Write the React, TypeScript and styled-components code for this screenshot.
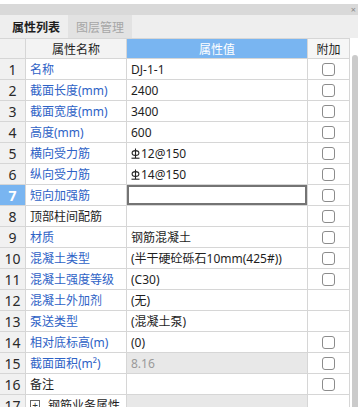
import React from "react"
import styled, { createGlobalStyle } from "styled-components"

const Global = createGlobalStyle`
  html, body { margin: 0; padding: 0; overflow: hidden; background: #fff; }
  body { font-family: "Noto Sans", "Noto Sans CJK SC", sans-serif; font-size: 12px; color: #222; }
`

const Panel = styled.div`width:358px;height:407px;padding-top:4px;box-sizing:border-box;display:flex;flex-direction:column;overflow:hidden;`
const TitleBar = styled.div`height:11px;background:#d9d9d9;display:flex;justify-content:flex-end;align-items:center;padding-right:2px;color:#8a8a8a;font-size:9px;line-height:11px;`
const TabStrip = styled.div`height:23px;background:#eeeeee;display:flex;align-items:stretch;padding-left:4px;`
const Tab = styled.div<{ $active?: boolean }>`
  display:flex;align-items:center;padding:0 8px;font-size:12px;
  font-weight:${p => (p.$active ? 700 : 400)};
  color:${p => (p.$active ? "#1e1e1e" : "#a6a6a6")};
  background:${p => (p.$active ? "#eeeeee" : "#e2e2e2")};
`
const Body = styled.div`display:flex;flex:1;min-height:0;`
const Grid = styled.div`display:grid;grid-template-columns:26px 101px 181px 42px;grid-auto-rows:21px;align-content:start;`
const Cell = styled.div<{ $bg?: string; $color?: string; $center?: boolean; $edit?: boolean }>`
  box-sizing:border-box;border-right:1px solid #d6d6d6;border-bottom:1px solid #d6d6d6;
  display:flex;align-items:center;white-space:nowrap;overflow:hidden;
  justify-content:${p => (p.$center ? "center" : "flex-start")};
  padding:${p => (p.$center ? "0" : "0 0 0 4px")};
  background:${p => p.$bg || "#fff"};
  color:${p => p.$color || "#1e1e1e"};
  box-shadow:${p => (p.$edit ? "inset 0 0 0 2px #747474" : "none")};
`
const NumCell = styled(Cell)<{ $sel?: boolean }>`
  font-size:14px;
  background:${p => (p.$sel ? "#79b5f1" : "#f1f1f1")};
  color:${p => (p.$sel ? "#fff" : "#2a2a2a")};
  font-weight:${p => (p.$sel ? 700 : 400)};
`
const HeadCell = styled(Cell)`border-top:1px solid #d6d6d6;`
const Check = styled.span`width:13px;height:13px;box-sizing:border-box;border:1px solid #8c8c8c;border-radius:3px;background:#fff;`
const Expander = styled.span`width:10px;height:10px;box-sizing:border-box;border:1px solid #666;margin-right:8px;display:flex;align-items:center;justify-content:center;font-size:10px;line-height:8px;color:#333;`
const ScrollCol = styled.div`flex:1;display:flex;justify-content:flex-end;padding-top:17px;`
const Thumb = styled.div`width:6px;background:#cbcbcb;border-radius:3px 3px 0 0;`

const Grade3 = () => (
  <svg width="9" height="11" viewBox="0 0 9 11" style={{ marginRight: 1 }}>
    <g stroke="#222" strokeWidth="1.1" fill="none">
      <line x1="4.5" y1="0.5" x2="4.5" y2="10" />
      <ellipse cx="4.5" cy="5" rx="3.4" ry="2.4" />
      <line x1="0.5" y1="10.2" x2="8.5" y2="10.2" />
    </g>
  </svg>
)

type Row = { name: string; value?: React.ReactNode; blue?: boolean; cb?: boolean; gray?: boolean; edit?: boolean; group?: boolean }

const BLUE = "#2e62c6"
const rows: Row[] = [
  { name: "名称", value: "DJ-1-1", blue: true, cb: true },
  { name: "截面长度(mm)", value: "2400", blue: true, cb: true },
  { name: "截面宽度(mm)", value: "3400", blue: true, cb: true },
  { name: "高度(mm)", value: "600", blue: true, cb: true },
  { name: "横向受力筋", value: <><Grade3 />12@150</>, blue: true, cb: true },
  { name: "纵向受力筋", value: <><Grade3 />14@150</>, blue: true, cb: true },
  { name: "短向加强筋", value: "", blue: true, cb: true, edit: true },
  { name: "顶部柱间配筋", value: "", cb: true },
  { name: "材质", value: "钢筋混凝土", blue: true, cb: true },
  { name: "混凝土类型", value: "(半干硬砼砾石10mm(425#))", blue: true, cb: true },
  { name: "混凝土强度等级", value: "(C30)", blue: true, cb: true },
  { name: "混凝土外加剂", value: "(无)", blue: true },
  { name: "泵送类型", value: "(混凝土泵)", blue: true },
  { name: "相对底标高(m)", value: "(0)", blue: true, cb: true },
  { name: "截面面积(m²)", value: "8.16", blue: true, cb: true, gray: true },
  { name: "备注", value: "", cb: true },
  { name: "钢筋业务属性", value: "", group: true, gray: true },
]

export default function App() {
  return (
    <>
      <Global />
      <Panel>
        <TitleBar>×</TitleBar>
        <TabStrip>
          <Tab $active>属性列表</Tab>
          <Tab>图层管理</Tab>
        </TabStrip>
        <Body>
          <Grid>
            <HeadCell $bg="#f1f1f1" />
            <HeadCell $bg="#f3f3f3" $center>属性名称</HeadCell>
            <HeadCell $bg="#79b5f1" $color="#fff" $center>属性值</HeadCell>
            <HeadCell $bg="#f6f6f6" $center>附加</HeadCell>
            {rows.map((r, i) => (
              <React.Fragment key={i}>
                <NumCell $center $sel={r.edit}>{i + 1}</NumCell>
                <Cell $color={r.blue ? BLUE : "#1e1e1e"}>
                  {r.group && <Expander>+</Expander>}
                  {r.name}
                </Cell>
                <Cell $edit={r.edit} $bg={r.gray ? "#e8e8e8" : "#fff"} $color={r.gray ? "#9a9a9a" : "#1e1e1e"}>
                  {r.value}
                </Cell>
                <Cell $center>{r.cb && <Check />}</Cell>
              </React.Fragment>
            ))}
          </Grid>
          <ScrollCol>
            <Thumb />
          </ScrollCol>
        </Body>
      </Panel>
    </>
  )
}
